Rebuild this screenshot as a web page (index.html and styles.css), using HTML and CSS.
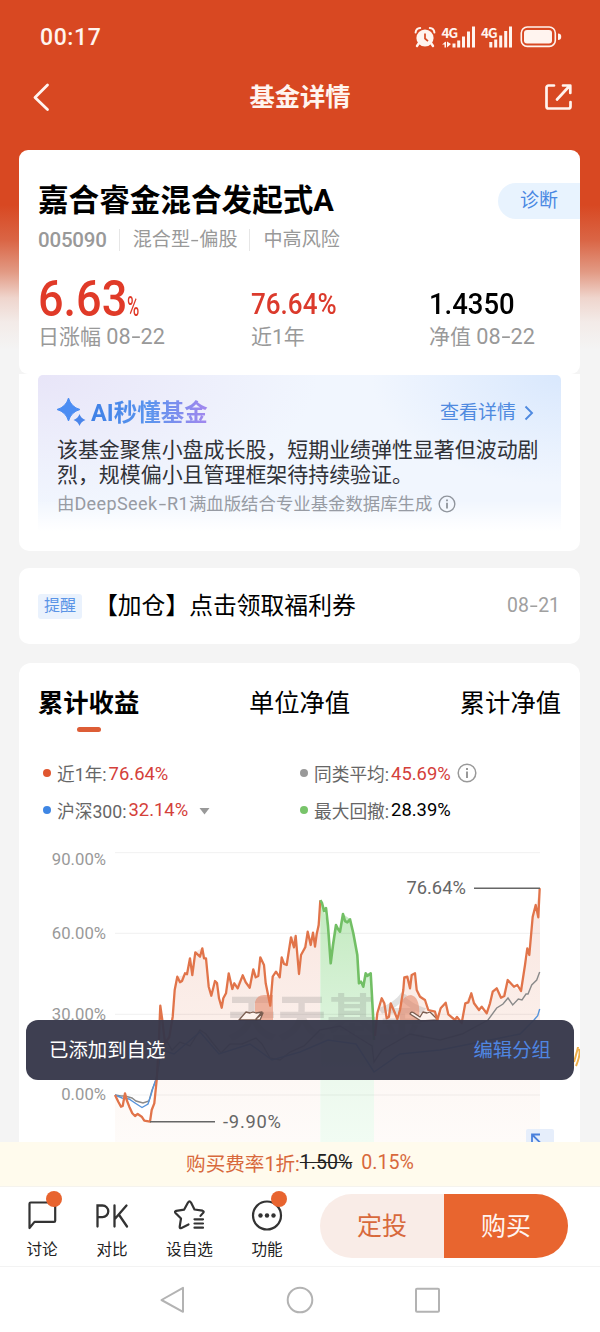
FILE: index.html
```
<!DOCTYPE html>
<html lang="zh-CN">
<head>
    <meta charset="UTF-8">
    <meta name="viewport" content="width=device-width, initial-scale=1.0">
    <title>基金详情</title>
    <link rel="stylesheet" href="styles.css">
</head>
<body>
<div class="phone">
    <header class="top">
        <div class="status">
            <span class="time">00:17</span>
            <svg class="status-icons" width="148" height="24" viewBox="0 0 148 24">
                <g fill="#fff4ef">
                    <circle cx="11" cy="13" r="8.6"/>
                    <path d="M5 18l-2 3M17 18l2 3" stroke="#fff4ef" stroke-width="2.4" stroke-linecap="round"/>
                    <path d="M1.6 7.500a5 5 0 0 1 4.600-4.500M20.400 7.500a5 5 0 0 0-4.600-4.500" fill="none" stroke="#fff4ef" stroke-width="2" stroke-linecap="round"/>
                    <path d="M11 8.500v5l3 2.600" fill="none" stroke="#d84822" stroke-width="1.700"/>
                    <path d="M38.500 18.500h3v4h-3zM43.200 15.500h3v7h-3zM48 11.500h3v11h-3zM53 6.500h3v16h-3zM58 1.500h3v21h-3z"/>
                    <path d="M28 19.500h4v-3zM30.500 17v5.500h1.500V17zM33 16.500v6l4-3.500z"/>
                    <path d="M75.300 17h3v5.500h-3zM80.200 14.500h3v8h-3zM85.200 10.500h3v12h-3zM90.200 6h3v16.500h-3zM95 1.500h3v21h-3z"/>
                    <rect x="110" y="5" width="28" height="13.500" rx="3"/>
                    <rect x="107.300" y="2" width="34" height="19.400" rx="6" fill="none" stroke="#fff4ef" stroke-width="1.600"/>
                    <path d="M144 8.500a3.200 3.200 0 0 1 0 6.500z"/>
                    <text x="27.500" y="12.500">4G</text>
                    <text x="67" y="12.500">4G</text>
                </g>
            </svg>
        </div>
        <div class="navbar">
            <svg width="28" height="32" viewBox="0 0 28 32"><path d="M21.500 4 9 16.500l12.500 12" fill="none" stroke="#fff4ef" stroke-width="2.800" stroke-linecap="round" stroke-linejoin="round"/></svg>
            <h1>基金详情</h1>
            <svg width="28" height="28" viewBox="0 0 28 28" fill="none" stroke="#fff4ef" stroke-width="2.700" stroke-linecap="round" stroke-linejoin="round"><path d="M10 2.500H4.500a2 2 0 0 0-2 2v19a2 2 0 0 0 2 2h20a2 2 0 0 0 2-2V19M13 16.500 25 3.500M19 2.500h7.300v7.500"/></svg>
        </div>
    </header>

    <main class="content">
        <section class="hero">
            <div class="hero-title">
                <h2>嘉合睿金混合发起式A</h2>
                <a class="diagnose">诊断</a>
            </div>
            <div class="meta">
                <span class="code">005090</span>
                <span>混合型<u>-</u>偏股</span>
                <span>中高风险</span>
            </div>
            <div class="stats">
                <div>
                    <div class="num big"><span>6.63</span><small>%</small></div>
                    <div class="label">日涨幅 <i>08<u>-</u>22</i></div>
                </div>
                <div>
                    <div class="num red"><span>76.64%</span></div>
                    <div class="label">近1年</div>
                </div>
                <div>
                    <div class="num"><span>1.4350</span></div>
                    <div class="label">净值 <i>08<u>-</u>22</i></div>
                </div>
            </div>
        </section>

        <section class="ai">
            <div class="ai-box">
                <div class="ai-head">
                    <svg width="30" height="30" viewBox="0 0 30 30">
                        <path d="M11.500 1Q14 10 23 12.500Q14 15 11.500 24Q9 15 0 12.500Q9 10 11.500 1z" fill="#4c8df3" stroke="#4c8df3" stroke-linejoin="round"/>
                        <path d="M22.500 17Q24 21.500 28.500 23Q24 24.500 22.500 29Q21 24.500 16.500 23Q21 21.500 22.500 17z" fill="#4a85ea"/>
                    </svg>
                    <b>AI秒懂基金</b>
                    <a>查看详情</a>
                    <svg class="more" width="12" height="18" viewBox="0 0 12 18"><path d="M2.500 2.500 9 9l-6.500 6.500" fill="none" stroke="#4f8ae0" stroke-width="1.900"/></svg>
                </div>
                <p>该基金聚焦小盘成长股，短期业绩弹性显著但波动剧<br>烈，规模偏小且管理框架待持续验证。</p>
                <div class="ai-foot">由<i>DeepSeek<u>-</u>R1</i>满血版结合专业基金数据库生成
                    <svg width="18" height="18" viewBox="0 0 20 20"><circle cx="10" cy="10" r="8.700" fill="none" stroke="#8f949c" stroke-width="1.500"/><path d="M10 8.500v6.500M10 5v2" stroke="#8f949c" stroke-width="2"/></svg>
                </div>
            </div>
        </section>

        <section class="notice">
            <span class="tag">提醒</span>
            <span class="notice-text">【加仓】点击领取福利券</span>
            <span class="date">08<u>-</u>21</span>
        </section>

        <section class="chart-card">
            <nav class="tabs">
                <a class="active">累计收益</a>
                <a>单位净值</a>
                <a>累计净值</a>
            </nav>
            <div class="legend">
                <div class="orange">近1年:<b>76.64%</b></div>
                <div class="grey">同类平均:<b>45.69%</b>
                    <svg width="20" height="20" viewBox="0 0 20 20"><circle cx="10" cy="10" r="8.800" fill="none" stroke="#999" stroke-width="1.500"/><path d="M10 8.500v6.500M10 5v2" stroke="#999" stroke-width="2"/></svg>
                </div>
                <div class="blue">沪深300:<b>32.14%</b>
                    <svg width="11" height="8" viewBox="0 0 11 8"><path d="M.5 1h10l-5 6.500z" fill="#999"/></svg>
                </div>
                <div class="green">最大回撤:<b class="black">28.39%</b></div>
            </div>

            <svg class="chart" width="561" height="310" viewBox="19 840 561 310">
                <defs>
                    <linearGradient id="orangeFill" x1="0" y1="890" x2="0" y2="1142" gradientUnits="userSpaceOnUse">
                        <stop offset="0" stop-color="#f9e6e0"/>
                        <stop offset=".5" stop-color="#fbeee9"/>
                        <stop offset=".75" stop-color="#fdf8f5"/>
                        <stop offset="1" stop-color="#fefbf9"/>
                    </linearGradient>
                    <linearGradient id="greenFill" x1="0" y1="900" x2="0" y2="1142" gradientUnits="userSpaceOnUse">
                        <stop offset="0" stop-color="#c3eabf"/>
                        <stop offset=".45" stop-color="#d8f2d8"/>
                        <stop offset=".75" stop-color="#edf9ee"/>
                        <stop offset="1" stop-color="#f1fcf3"/>
                    </linearGradient>
                </defs>

                <!-- filled areas -->
                <path fill="url(#orangeFill)" d="M115 1142V1095L121 1107 125 1093 132 1113 141 1117 150 1122 154 1103 160 1006 165 1043 170 1037 175 990 177 977 187 974 190 958 192 975 195 952 202 948 206 958 211 996 215 981 222 1008 229 973 233 989 243 975 250 988 253 969 258 976 260 957 264 965 270 1006 273 977 280 977 282 957 287 965 291 937 296 936 299 974 301 955 308 932 315 947 320.300 900V1142z"/>
                <path fill="url(#orangeFill)" d="M374 1142V1036L377 1013 382 998 387 1018 391 1003 397 1019 403 990 405 977 415 973 417 990 425 1000 428 1010 435 1012 437 1020 446 1003 448 1014 462 1023 465 1003 471 993 479 1010 487 1013 493 992 497 988 501 998 508 980 514 987 521 991 525 965 529 955 533 917 536 905 540 888V1142z"/>
                <path fill="url(#greenFill)" d="M320.300 1142V900L324 911 328 926 331 963 336 925 340 932 343 914 350 919 357 955 359 983 363 987 366 973 371 973 374 1040V1142z"/>

                <path d="M115 852.700H540M115 933.300H540M115 1014.300H540M115 1095H540" stroke="#000" stroke-opacity=".06"/>

                <text class="watermark" x="227" y="1036">天天基金</text>
                <path d="M255 1020v-18q2-7 9-7h9v25zM400 1020q-2-24 11-25 10 2 8 25z" fill="#e58a6c" opacity=".6"/>
                <g fill="#fdf3ee" stroke="#7a5d50" stroke-width="1.300" stroke-linejoin="round">
                    <path d="M239 1020l7-8 4 1 3-1 3 1 6-1-6 7 7-6-3 7z"/>
                    <path d="M421 1021l-11-7q1-3 4-1l6 4 3-5 4 1 3-1 8 8z"/>
                </g>

                <!-- market and category lines -->
                <g fill="none" stroke-width="1.400">
                    <path stroke="#8a8a8a" d="M115 1095 121 1096 125 1096 132 1098 136 1101 143 1103 149 1101 152 1090 156 1080 160 1058 166 1040 172 1050 180 1042 190 1046 200 1030 206 1034 212 1042 221 1053 230 1044 242 1044 256 1038 262 1044 270 1058 280 1060 290 1052 304 1046 320 1030 340 1026 356 1036 372 1046 374 1062 382 1050 410 1034 440 1040 462 1034 488 1020 496.700 1008 503 1004 508 998 512.700 1005 518.300 999 522 1000 526 994 528 994 531.700 985 536.700 980 539.700 972"/>
                    <path stroke="#5794db" d="M115 1095 122 1098 129 1099 135 1103 142 1107.500 148 1104 151 1095 153 1088 157 1076 161 1050 174 1054 200 1032 219 1054 250 1044 272 1060 300 1052 328 1040 356 1044 374 1072 400 1054 440 1050 480 1042 520 1034 534 1020 537.700 1015.700 539.700 1009"/>
                </g>

                <!-- fund line, the drawdown part is green -->
                <g fill="none" stroke-width="2.300" stroke-linejoin="round">
                    <path stroke="#e1744a" d="M115 1095 118.300 1101.700 121 1106.700 122.700 1106 125 1093.300 126.700 1100 129.300 1106.700 132.300 1113.300 135 1116 137.700 1114 141.700 1116.700 144.300 1120.700 150 1121.700 151.700 1110 154.300 1103.300 156.700 1080 158.300 1053 160.300 1005.700 162.300 1020 165 1043 169.300 1037 172.700 1016.700 174.700 990 177.300 976.700 180 982.300 182 981 185 973.300 187 974.300 190 958.300 192.300 975 195.300 952.300 200 956.700 202.300 948.300 204 958.300 206 958.300 208.700 986.700 211.300 995.700 215 981 217 983 219 998.300 221.700 1007.700 223.300 998.300 226 993.300 228.700 973.300 232.300 989 234.300 983.300 237.700 988.300 242.700 975.300 245.700 982.300 249.700 987.700 253.300 969.300 255.700 977.300 258.300 976 260.300 957.300 264 965 265.700 983.300 270.300 1005.700 272.700 976.700 276 971.700 279.700 977.300 281.700 957.300 284 964 286.700 965 289 950 291 937.300 294 947.300 295.700 936 299 974 301 955 305.300 947.300 307.700 931.700 310.700 945 313 932.700 315 946.700 316.700 934 318.700 925 320.300 900.300"/>
                    <path stroke="#72bf65" stroke-width="2.600" d="M320.300 900.300 322 903 324 911 326 908 328 926 330.700 963.300 333 945 336 925 338 929 340 931.700 343 914 345 921 347.300 922.300 350 919.300 353.300 933.300 357.300 955 359 983.300 361 981.700 363.300 986.700 365.700 973.300 367.300 976 370.700 973.300 373.300 1020 374 1040"/>
                    <path stroke="#e1744a" d="M375 1036 377.300 1013.300 381.700 998.300 384.300 1003.300 386.700 1018.300 389 1016.700 390.700 1003.300 395 1013.300 397.300 1019 400 1010 403.300 990 404.300 977.300 407.300 976.700 410 988.300 411.700 975 415 973.300 416.700 990 420 996.700 425 1000 428.300 1010 435 1011.700 437.300 1020 440.700 1008.300 445.700 1002.700 448.300 1014.300 455 1020 457 1017 461.700 1023 465.300 1003.300 468.300 1002.300 471.300 993.300 474 1003.300 479 1010 481.700 1006.700 486.700 1013.300 490 1003.300 492.700 991.700 496.700 988.300 501 997.700 504.300 996 507.700 980 514 986.700 517.300 985 521 991 525 965 527.300 948.300 529.300 955 532.700 916.700 535.700 905 538.300 917.300 539.700 888.300"/>
                </g>

                <path d="M474 888.300H540M150 1121.700H215" stroke="#666" stroke-width="1.500"/>
                <g class="peak">
                    <text x="406.500" y="894">76.64%</text>
                    <text x="223" y="1127.500" textLength="58">-9.90%</text>
                </g>
                <g class="axis">
                    <text x="106" y="865">90.00%</text>
                    <text x="106" y="938.500">60.00%</text>
                    <text x="106" y="1019.500">30.00%</text>
                    <text x="106" y="1100">0.00%</text>
                </g>

                <rect x="526" y="1129" width="28" height="28" rx="2" fill="#e6eefb"/>
                <path d="M532 1143v-8.500h8M532.500 1135l8 8" fill="none" stroke="#4a80dc" stroke-width="1.800"/>
                <path d="M574 1062q4-14 4-15M576 1066q5-12 3-17" fill="none" stroke="#efb04c" stroke-width="2"/>
            </svg>
        </section>
    </main>

    <div class="toast"><span>已添加到自选</span><a>编辑分组</a></div>

    <div class="fee">购买费率1折:<s>1.50%</s><span>0.15%</span></div>

    <footer class="actions">
        <div class="action">
            <svg width="36" height="36" viewBox="0 0 36 36" fill="none" stroke="#333" stroke-width="2.200" stroke-linejoin="round"><path d="M5.500 30V5.700q0-1.200 1.200-1.200H30q1.200 0 1.200 1.200v17q0 1.200-1.200 1.200H10.500z"/></svg>
            <em></em>
            <span>讨论</span>
        </div>
        <div class="action">
            <svg width="36" height="36" viewBox="0 0 36 36" fill="none" stroke="#333" stroke-width="2.300" stroke-linecap="round"><path d="M3.500 28.500V7.500h5a5.800 5.800 0 0 1 0 11.600h-5M20.500 7.500v21M32.500 7.500 20.800 21M24.800 16.500 33 28.500"/></svg>
            <span>对比</span>
        </div>
        <div class="action">
            <svg width="36" height="36" viewBox="0 0 36 36" fill="none" stroke="#333" stroke-width="2.200" stroke-linecap="round" stroke-linejoin="round"><path d="M16.500 26.500 9.500 30q-2 .7-1.800-1.300L9 20.500 3.500 15q-1.300-1.500.7-2.200l8-1.200L16 4.500q1.500-2.200 3 0l3.500 7 8 1.200q2 .7.600 2.200l-2.600 3M22.500 21.300H31M22.500 25.500H31M22.500 29.700H31"/></svg>
            <span>设自选</span>
        </div>
        <div class="action">
            <svg width="36" height="36" viewBox="0 0 36 36"><circle cx="18" cy="17.500" r="14" fill="none" stroke="#333" stroke-width="2.200"/><g fill="#333"><circle cx="11.500" cy="17.500" r="2.200"/><circle cx="18" cy="17.500" r="2.200"/><circle cx="24.500" cy="17.500" r="2.200"/></g></svg>
            <em></em>
            <span>功能</span>
        </div>
        <div class="buttons">
            <button class="plan">定投</button>
            <button class="buy">购买</button>
        </div>
    </footer>

    <div class="sysnav">
        <svg width="28" height="28" viewBox="0 0 28 28"><path d="M24 1.800v24L2.500 14z"/></svg>
        <svg width="28" height="28" viewBox="0 0 28 28"><circle cx="14" cy="14" r="12.300"/></svg>
        <svg width="28" height="28" viewBox="0 0 28 28"><rect x="3" y="2.700" width="23" height="23" rx="1"/></svg>
    </div>
</div>
</body>
</html>
```
FILE: styles.css
```
* {
    box-sizing: border-box;
}
body {
    margin: 0;
    font-family: Roboto, "Noto Sans CJK SC", sans-serif;
    color: #000;
}
h1, h2, p {
    margin: 0;
}
i {
    font-style: normal;
}
/* wide dash */
u {
    display: inline-block;
    margin: 0 2px;
    text-decoration: none;
    transform: scaleX(1.5);
}
svg {
    display: block;
    flex: none;
}
.phone {
    position: relative;
    display: flex;
    flex-direction: column;
    width: 600px;
    height: 1332px;
    overflow: hidden;
    white-space: nowrap;
    background: linear-gradient(#d84822 0, #d84822 205px, #da6545 240px, #e29a84 272px, #efd5cd 298px, #f3ebe8 322px, #f4f4f4 350px);
}

/* header */
.top {
    height: 150px;
    color: #fff4ef;
}
.status {
    display: flex;
    align-items: center;
    justify-content: space-between;
    height: 74px;
    padding: 0 38px 0 40px;
}
.time {
    font-size: 23px;
    font-weight: 500;
    letter-spacing: 0.6px;
}
.status-icons text {
    font-family: "Noto Sans CJK SC", sans-serif;
    font-size: 13.5px;
    font-weight: 700;
    letter-spacing: -0.9px;
}
.navbar {
    display: flex;
    align-items: center;
    justify-content: space-between;
    height: 46px;
    padding: 0 28px 0 26px;
}
.navbar h1 {
    padding: 2px 0 0 2px;
    font-size: 25.3px;
    line-height: 40px;
    font-weight: 700;
}

/* cards */
.content {
    height: 992px;
    padding: 0 20px 0 19px;
    overflow: hidden;
}
.hero {
    height: 224px;
    padding: 30px 0 0 19px;
    background: #fff;
    border-radius: 9px;
}
.hero-title {
    display: flex;
    justify-content: space-between;
    align-items: center;
    height: 41px;
}
.hero-title h2 {
    font-size: 30.6px;
    line-height: 41px;
    font-weight: 700;
}
.diagnose {
    width: 82px;
    height: 36px;
    padding-left: 22px;
    border-radius: 18px 0 0 18px;
    background: #e8f3fe;
    color: #4a88e2;
    font-size: 19px;
    line-height: 36px;
}
.meta {
    display: flex;
    align-items: center;
    height: 20px;
    margin-top: 9px;
    color: #999;
    font-size: 19.1px;
    line-height: 22px;
}
.meta span + span {
    margin-left: 12px;
    padding-left: 13px;
    border-left: 1px solid #e6e6e6;
}
.meta .code {
    font-size: 20.5px;
    font-weight: 500;
    letter-spacing: -0.2px;
}
.stats {
    display: grid;
    grid-template-columns: 213px 178px 1fr;
    margin-top: 26px;
}
.num {
    height: 44px;
    font-size: 30px;
    line-height: 55px;
    font-weight: 500;
}
/* condensed digits */
.num span {
    display: inline-block;
    transform: scaleX(0.915);
    transform-origin: left;
}
.num.red {
    color: #db3a2c;
}
.num.red span {
    transform: scaleX(0.868);
}
.num.big {
    display: flex;
    color: #e03a28;
    font-size: 50px;
    line-height: 46px;
}
.num.big span {
    width: 89px;
    transform: scaleX(0.9);
}
.num.big small {
    margin-top: 8px;
    font-size: 27px;
    font-weight: 500;
    transform: scaleX(0.62);
    transform-origin: left;
}
.label {
    color: #999;
    font-size: 21px;
    line-height: 34px;
}
.label i {
    font-size: 21.7px;
}

/* AI summary */
.ai {
    height: 177px;
    padding: 1px 19px 0;
    background: #fff;
    border-radius: 0 0 10px 10px;
}
.ai-box {
    height: 156px;
    padding: 22px 19px 0;
    border-radius: 5px 5px 0 0;
    background:
        linear-gradient(rgba(255, 255, 255, 0) 80%, #fff 100%),
        radial-gradient(ellipse 190px 110px at 100% 0, #d9e8fd, rgba(217, 232, 253, 0)),
        radial-gradient(ellipse 280px 130px at 0 0, #e8e5f8, rgba(236, 233, 249, 0)),
        #f1f6fe;
}
.ai-head {
    display: flex;
    align-items: center;
    height: 32px;
}
.ai-head b {
    margin-left: 4px;
    font-size: 23.5px;
    line-height: 32px;
    background: linear-gradient(90deg, #3e80e6, #5b95ee 50%, #a387ee);
    -webkit-background-clip: text;
    background-clip: text;
    color: transparent;
}
.ai-head a {
    margin-left: auto;
    color: #4f8ae0;
    font-size: 19px;
    line-height: 30px;
}
.ai-head svg:first-child {
    margin-top: -2px;
}
.more {
    margin: -1px 7px 0;
}
.ai-box p {
    margin-top: 9px;
    color: #303238;
    font-size: 20.95px;
    line-height: 25px;
}
.ai-foot {
    display: flex;
    align-items: center;
    color: #979ba3;
    font-size: 17.4px;
    line-height: 32px;
}
.ai-foot i {
    font-size: 18px;
    letter-spacing: 0.4px;
}
.ai-foot svg {
    margin: -1px 0 0 6px;
}

/* notice */
.notice {
    display: flex;
    align-items: center;
    height: 76px;
    margin-top: 17px;
    padding: 0 20px 0 19px;
    background: #fff;
    border-radius: 10px;
}
.tag {
    width: 44px;
    height: 25px;
    margin-right: 12px;
    background: #eaf2fd;
    border-radius: 3px;
    color: #5a94e6;
    font-size: 16px;
    line-height: 24px;
    text-align: center;
}
.notice-text {
    font-size: 23.8px;
    line-height: 34px;
}
.date {
    margin-left: auto;
    padding-bottom: 2px;
    color: #a0a0a0;
    font-size: 19.4px;
}

/* chart */
.chart-card {
    height: 500px;
    margin-top: 19px;
    background: #fff;
    border-radius: 12px 12px 0 0;
}
.tabs {
    display: flex;
    justify-content: space-between;
    height: 69px;
    padding: 21px 19px 0;
    font-size: 25.3px;
    line-height: 40px;
}
.tabs .active {
    font-weight: 700;
}
.tabs .active::after {
    content: "";
    display: block;
    width: 24px;
    height: 5px;
    margin: 3px auto 0;
    border-radius: 2.5px;
    background: #dd5d36;
}
.legend {
    display: grid;
    grid-template-columns: 257px 1fr;
    grid-auto-rows: 36.5px;
    margin-top: 23px;
    padding-left: 24px;
    color: #666;
    font-size: 17.7px;
}
.legend div {
    display: flex;
    align-items: center;
}
.legend div::before {
    content: "";
    width: 8px;
    height: 8px;
    margin-right: 6px;
    border-radius: 50%;
    background: #999;
}
.legend .orange::before {
    background: #e0562f;
}
.legend .blue::before {
    background: #3f86e4;
}
.legend .green::before {
    background: #78c46a;
}
.legend b {
    margin-left: 2px;
    color: #d4403a;
    font-size: 18.4px;
    font-weight: 400;
}
.legend b.black {
    color: #000;
}
.legend svg {
    margin-left: 6px;
}
.legend .blue svg {
    margin: 2px 0 0 11px;
}
.chart {
    margin-top: 12px;
}
.axis text {
    fill: #999;
    font-size: 16.7px;
    text-anchor: end;
}
.peak text {
    fill: #666;
    font-size: 18.3px;
}
.watermark {
    font-size: 50px;
    font-weight: 700;
    fill: #777;
    fill-opacity: 0.22;
}

/* message over the chart */
.toast {
    position: absolute;
    left: 26px;
    top: 1020px;
    display: flex;
    align-items: center;
    justify-content: space-between;
    width: 548px;
    height: 60px;
    padding: 0 23px 3px;
    background: rgba(54, 55, 74, 0.96);
    border-radius: 12px;
    color: #fff;
    font-size: 19.4px;
}
.toast a {
    color: #4f86e2;
}

/* bottom */
.fee {
    display: flex;
    align-items: center;
    justify-content: center;
    height: 45px;
    padding-bottom: 3px;
    background: #fffbed;
    border-bottom: 1px solid #f5f3ee;
    color: #d8693c;
    font-size: 19.6px;
}
.fee s {
    color: #222;
}
.fee span {
    margin-left: 9px;
}
.actions {
    display: flex;
    align-items: flex-start;
    height: 80px;
    padding: 7px 32px 0 7px;
    background: #fff;
    border-bottom: 1px solid #f3f3f3;
}
.action {
    position: relative;
    display: flex;
    flex-direction: column;
    align-items: center;
    width: 70px;
    padding-top: 4px;
    color: #222;
    font-size: 15.6px;
    line-height: 33px;
}
.action:nth-child(3) {
    width: 85px;
}
.action em {
    position: absolute;
    left: 39px;
    top: -3px;
    width: 16px;
    height: 16px;
    border-radius: 50%;
    background: #e8642f;
}
.buttons {
    display: flex;
    margin-left: auto;
}
.buttons button {
    width: 124px;
    height: 64px;
    padding: 0 0 4px;
    border: none;
    font-family: inherit;
    font-size: 25px;
}
.plan {
    border-radius: 32px 0 0 32px;
    background: #f9ece7;
    color: #d8693c;
}
.buy {
    border-radius: 0 32px 32px 0;
    background: #e8652f;
    color: #fff4ef;
}
.sysnav {
    display: flex;
    justify-content: center;
    align-items: center;
    gap: 99px;
    height: 65px;
    background: #fff;
}
.sysnav svg {
    fill: none;
    stroke: #b3b3b3;
    stroke-width: 2;
    stroke-linejoin: round;
}
```
